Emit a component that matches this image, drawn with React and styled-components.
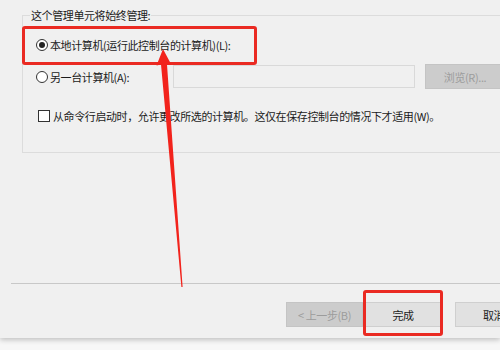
import React from "react";
import styled, { createGlobalStyle } from "styled-components";

const GlobalStyle = createGlobalStyle`
  html, body {
    margin: 0;
    padding: 0;
    background: #f7f7f7;
  }
  body {
    width: 500px;
    height: 350px;
    overflow: hidden;
    font-family: "Noto Sans CJK SC", "Noto Sans", sans-serif;
    font-size: 11px;
    letter-spacing: -0.4px;
    color: #1b1b1b;
  }
`;

const Screen = styled.div`
  position: relative;
  width: 500px;
  height: 350px;
  overflow: hidden;
`;

const Dialog = styled.div`
  width: 500px;
  height: 338px;
  background: #f0f0f0;
  box-shadow: 0 2px 5px rgba(0, 0, 0, 0.22);
  display: flex;
  flex-direction: column;
  overflow: hidden;
`;

const GroupBox = styled.div`
  margin: 15px 0 0 22px;
  width: 520px;
  border: 1px solid #dcdcdc;
  border-right: none;
  padding: 0 0 25px 13px;
  display: flex;
  flex-direction: column;
  flex-shrink: 0;
`;

const GroupTitle = styled.span`
  align-self: flex-start;
  margin: -8px 0 0 -6px;
  padding: 0 1px;
  line-height: 15px;
  background: #f0f0f0;
`;

const Row = styled.div`
  display: flex;
  align-items: center;
  height: 23px;
  margin-top: ${(p) => p.$top}px;
  padding-left: ${(p) => p.$indent || 0}px;
  flex-shrink: 0;
`;

const Option = styled.label`
  display: flex;
  align-items: center;
  gap: 2px;
  width: ${(p) => (p.$width ? `${p.$width}px` : "auto")};
  flex-shrink: 0;
  white-space: nowrap;
`;

const Radio = styled.span`
  width: 12px;
  height: 12px;
  box-sizing: border-box;
  border: 1px solid #333;
  border-radius: 50%;
  background: #fff;
  display: flex;
  align-items: center;
  justify-content: center;
  flex-shrink: 0;

  &::after {
    content: "";
    display: ${(p) => (p.$checked ? "block" : "none")};
    width: 6px;
    height: 6px;
    border-radius: 50%;
    background: #222;
  }
`;

const Check = styled.span`
  width: 12px;
  height: 12px;
  box-sizing: border-box;
  border: 1px solid #333;
  background: #fff;
  flex-shrink: 0;
  margin-right: 1px;
`;

const TextBox = styled.div`
  width: 242px;
  height: 23px;
  box-sizing: border-box;
  border: 1px solid #d9d9d9;
  background: #f0f0f0;
  flex-shrink: 0;
`;

const Button = styled.div`
  width: ${(p) => p.$width || 77}px;
  height: 25px;
  box-sizing: border-box;
  display: flex;
  align-items: center;
  justify-content: center;
  flex-shrink: 0;
  background: ${(p) => (p.$disabled ? "#cccccc" : "#e1e1e1")};
  border: 1px solid ${(p) => (p.$disabled ? "#c4c4c4" : "#cfcfcf")};
  color: ${(p) => (p.$disabled ? "#9c9c9c" : "#1b1b1b")};
  margin-left: ${(p) => p.$gap || 0}px;
`;

const Spacer = styled.div`
  flex: 1;
`;

const Separator = styled.div`
  height: 1px;
  margin-left: 11px;
  background: #c8c8c8;
  flex-shrink: 0;
`;

const ButtonRow = styled.div`
  display: flex;
  padding: 18px 0 11px 286px;
  flex-shrink: 0;
`;

const Highlight = styled.div`
  position: absolute;
  left: ${(p) => p.$x}px;
  top: ${(p) => p.$y}px;
  width: ${(p) => p.$w}px;
  height: ${(p) => p.$h}px;
  box-sizing: border-box;
  border: 3px solid #ea2a22;
  border-radius: 3px;
  pointer-events: none;
`;

const ArrowLayer = styled.svg`
  position: absolute;
  left: 0;
  top: 0;
  pointer-events: none;
`;

export default function App() {
  return (
    <Screen>
      <GlobalStyle />
      <Dialog>
        <GroupBox>
          <GroupTitle>这个管理单元将始终管理:</GroupTitle>
          <Row $top={10}>
            <Option>
              <Radio $checked />
              本地计算机(运行此控制台的计算机)(L):
            </Option>
          </Row>
          <Row $top={9}>
            <Option $width={137}>
              <Radio />
              另一台计算机(A):
            </Option>
            <TextBox />
            <Button $disabled $width={80} $gap={10}>
              浏览(R)...
            </Button>
          </Row>
          <Row $top={16} $indent={2}>
            <Option>
              <Check />
              从命令行启动时，允许更改所选的计算机。这仅在保存控制台的情况下才适用(W)。
            </Option>
          </Row>
        </GroupBox>
        <Spacer />
        <Separator />
        <ButtonRow>
          <Button $disabled>&lt; 上一步(B)</Button>
          <Button $width={78} $gap={1}>完成</Button>
          <Button $gap={13}>取消</Button>
        </ButtonRow>
      </Dialog>

      <Highlight $x={22} $y={26} $w={235} $h={39} />
      <Highlight $x={363} $y={290} $w={80} $h={46} />
      <ArrowLayer width="500" height="350" viewBox="0 0 500 350">
        <polygon
          points="163,49 156.5,65.5 161,64.5 181.4,287 182.6,287 167,64.5 171.5,65"
          fill="#f2231c"
        />
      </ArrowLayer>
    </Screen>
  );
}
